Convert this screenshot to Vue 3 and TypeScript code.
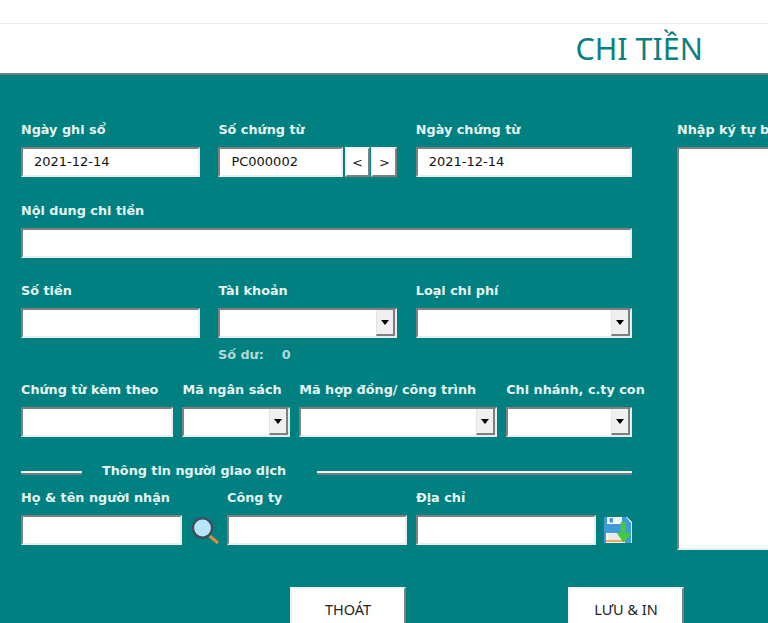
<script setup lang="ts">
const fillBars = [0, 1, 2]
</script>

<template>
  <div class="page">
    <div class="topbar"></div>
    <header class="title-bar">
      <h1>CHI TIỀN</h1>
    </header>

    <main class="panel">
      <div class="form">
        <div class="row row-a">
          <div class="field">
            <label>Ngày ghi sổ</label>
            <input class="box" type="text" value="2021-12-14" readonly />
          </div>
          <div class="field">
            <label>Số chứng từ</label>
            <div class="voucher">
              <input class="box" type="text" value="PC000002" readonly />
              <button class="step">&lt;</button>
              <button class="step">&gt;</button>
            </div>
          </div>
          <div class="field">
            <label>Ngày chứng từ</label>
            <input class="box" type="text" value="2021-12-14" readonly />
          </div>
        </div>

        <div class="field gap-content">
          <label>Nội dung chi tiền</label>
          <input class="box" type="text" />
        </div>

        <div class="row row-a gap-money">
          <div class="field">
            <label>Số tiền</label>
            <input class="box" type="text" />
          </div>
          <div class="field">
            <label>Tài khoản</label>
            <div class="combo"><span class="drop"><i></i></span></div>
          </div>
          <div class="field">
            <label>Loại chi phí</label>
            <div class="combo"><span class="drop"><i></i></span></div>
          </div>
        </div>

        <div class="balance"><span>Số dư:</span><span>0</span></div>

        <div class="row row-b">
          <div class="field">
            <label>Chứng từ kèm theo</label>
            <input class="box" type="text" />
          </div>
          <div class="field">
            <label>Mã ngân sách</label>
            <div class="combo"><span class="drop"><i></i></span></div>
          </div>
          <div class="field">
            <label>Mã hợp đồng/ công trình</label>
            <div class="combo"><span class="drop"><i></i></span></div>
          </div>
          <div class="field">
            <label>Chi nhánh, c.ty con</label>
            <div class="combo"><span class="drop"><i></i></span></div>
          </div>
        </div>

        <div class="divider">
          <span class="rule rule-left"></span>
          <span class="divider-text">Thông tin người giao dịch</span>
          <span class="rule rule-right"></span>
        </div>

        <div class="row-c">
          <div class="field name-field">
            <label>Họ &amp; tên người nhận</label>
            <input class="box" type="text" />
          </div>
          <svg class="icon-search" width="28" height="28" viewBox="0 0 28 28">
            <path d="M17.5 18l9.5 8" stroke="#d9913a" stroke-width="3" />
            <circle cx="11.5" cy="11" r="9.6" fill="#b7e4fa" stroke="#3f4d5c" stroke-width="2.4" />
          </svg>
          <div class="field text-field">
            <label>Công ty</label>
            <input class="box" type="text" />
          </div>
          <div class="field text-field address-field">
            <label>Địa chỉ</label>
            <input class="box" type="text" />
          </div>
          <svg class="icon-save" width="28" height="26" viewBox="0 0 28 26">
            <path d="M0 0h23l5 5v21H0z" fill="#3f9bd8" />
            <path d="M23 0l5 5v21h-1V6l-5-6z" fill="#e8f2f8" />
            <rect x="3" y="0" width="15" height="7" fill="#f4f8fb" />
            <rect x="5.5" y="1" width="3.5" height="4.5" fill="#3f9bd8" />
            <rect x="2" y="16" width="19" height="10" fill="#f6f6f0" />
            <rect x="2" y="23" width="19" height="2" fill="#efa75a" />
            <rect v-for="n in fillBars" :key="n" x="4" :y="17.5 + n * 2" width="12" height="1" fill="#d5dde2" />
            <path d="M16.7 5H22v11h5.7l-8.2 9.5L12.7 16h4z" fill="#44c93c" />
          </svg>
        </div>

        <div class="actions">
          <button class="action">THOÁT</button>
          <button class="action">LƯU &amp; IN</button>
        </div>
      </div>

      <aside class="side">
        <label>Nhập ký tự bất kỳ</label>
        <div class="memo"></div>
      </aside>
    </main>
  </div>
</template>

<style scoped>
.page {
  width: 768px;
  height: 623px;
  overflow: hidden;
  background: #fff;
  font-family: "DejaVu Sans", sans-serif;
}

.topbar {
  height: 23px;
  border-bottom: 1px solid #ececec;
}

.title-bar {
  height: 49px;
  display: flex;
  justify-content: flex-end;
  align-items: center;
  padding-right: 65px;
  border-bottom: 2px solid #6f7f7f;
}

.title-bar h1 {
  margin: 0;
  font-family: "Noto Sans", sans-serif;
  font-size: 30.5px;
  font-weight: 400;
  line-height: 49px;
  color: #0a8080;
}

.panel {
  display: flex;
  height: 548px;
  background: #008080;
  padding: 45px 0 0 21px;
}

.form {
  width: 611px;
  flex-shrink: 0;
}

.row {
  display: grid;
}

.row-a {
  grid-template-columns: 179px 179px 216px;
  column-gap: 18.4px;
}

.row-b {
  grid-template-columns: 152px 107.5px 197.5px 126px;
  column-gap: 9.4px;
}

.row-c {
  display: flex;
  align-items: flex-end;
}

.field {
  min-width: 0;
}

.name-field {
  width: 161px;
}

.text-field {
  width: 180px;
}

.address-field {
  margin-left: 9px;
}

label {
  display: block;
  height: 27px;
  font-size: 12.8px;
  font-weight: 700;
  line-height: 20px;
  color: #e6f5f2;
  white-space: nowrap;
}

.box {
  display: block;
  box-sizing: border-box;
  width: 100%;
  height: 30px;
  padding: 0 0 2px 11px;
  border: 2px solid;
  border-color: #7f7f7f #e8eeee #e8eeee #7f7f7f;
  border-radius: 0;
  outline: none;
  background: #fff;
  font-family: inherit;
  font-size: 13px;
  color: #111;
}

.voucher {
  display: grid;
  grid-template-columns: 125px 25px 26px;
  column-gap: 1.5px;
}

.step {
  box-sizing: border-box;
  height: 30px;
  padding: 0;
  border: 2px solid;
  border-color: #f2f2f2 #7f7f7f #7f7f7f #f2f2f2;
  background: #fff;
  font-family: inherit;
  font-size: 13px;
  color: #222;
}

.gap-content {
  margin-top: 24px;
}

.gap-money {
  margin-top: 23px;
}

.combo {
  box-sizing: border-box;
  height: 30px;
  display: flex;
  justify-content: flex-end;
  border: 2px solid;
  border-color: #7f7f7f #e8eeee #e8eeee #7f7f7f;
  background: #fff;
}

.drop {
  box-sizing: border-box;
  width: 19px;
  display: flex;
  align-items: center;
  justify-content: center;
  border-right: 2px solid #7f7f7f;
  border-bottom: 2px solid #7f7f7f;
  border-left: 1px solid #e4e4e4;
  background: #f0f0f0;
}

.drop i {
  width: 0;
  height: 0;
  border-top: 5px solid #000;
  border-left: 4px solid transparent;
  border-right: 4px solid transparent;
}

.balance {
  display: flex;
  gap: 18px;
  height: 42px;
  padding: 8px 0 0 197px;
  box-sizing: border-box;
  font-size: 12.8px;
  font-weight: 700;
  line-height: 18px;
  color: #b5d8d6;
}

.divider {
  display: flex;
  align-items: center;
  height: 18px;
  margin-top: 25px;
  margin-bottom: 8px;
}

.rule {
  height: 4px;
  margin-top: 3px;
  box-sizing: border-box;
  background: #f4f4f4;
  border-bottom: 2px solid #6f7f7f;
}

.rule-left {
  width: 61px;
}

.rule-right {
  flex: 1;
}

.divider-text {
  margin: 0 30px 0 20px;
  width: 185px;
  font-size: 12.8px;
  font-weight: 700;
  line-height: 18px;
  color: #e6f5f2;
  white-space: nowrap;
}

.icon-search {
  display: block;
  flex-shrink: 0;
  margin: 0 8px 0 9px;
}

.icon-save {
  display: block;
  flex-shrink: 0;
  margin: 0 0 2px 8px;
}

.actions {
  display: flex;
  gap: 162px;
  margin-top: 42px;
  padding-left: 269px;
}

.action {
  flex-shrink: 0;
  box-sizing: border-box;
  width: 116px;
  height: 60px;
  padding: 0 0 16px;
  border: 2px solid;
  border-color: #f2f2f2 #7f7f7f #7f7f7f #f2f2f2;
  background: #fff;
  font-family: "Noto Sans", sans-serif;
  font-size: 14.5px;
  color: #222;
}

.side {
  margin-left: 45px;
  flex-shrink: 0;
  width: 200px;
}

.memo {
  box-sizing: border-box;
  width: 200px;
  height: 403px;
  border: 2px solid;
  border-color: #7f7f7f #e8eeee #e8eeee #7f7f7f;
  background: #fff;
}
</style>

<style>
html,
body {
  margin: 0;
  overflow: hidden;
}
</style>
